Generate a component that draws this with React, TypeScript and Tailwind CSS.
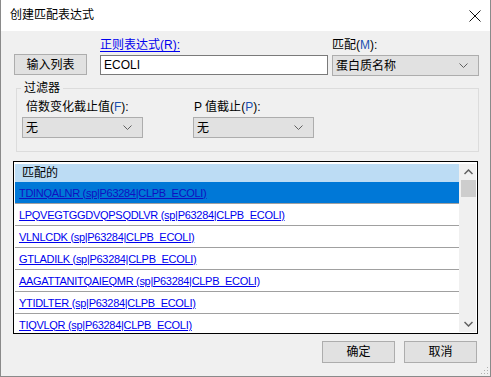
import React from 'react';

const rows = [
  'TDINQALNR (sp|P63284|CLPB_ECOLI)',
  'LPQVEGTGGDVQPSQDLVR (sp|P63284|CLPB_ECOLI)',
  'VLNLCDK (sp|P63284|CLPB_ECOLI)',
  'GTLADILK (sp|P63284|CLPB_ECOLI)',
  'AAGATTANITQAIEQMR (sp|P63284|CLPB_ECOLI)',
  'YTIDLTER (sp|P63284|CLPB_ECOLI)',
  'TIQVLQR (sp|P63284|CLPB_ECOLI)',
];

const font = { fontFamily: '"Segoe UI", "Liberation Sans", "Noto Sans CJK SC", sans-serif' };

function Chevron() {
  return (
    <svg width="9" height="6" viewBox="0 0 9 6" className="shrink-0">
      <path d="M0.5 0.5 L4.5 4.5 L8.5 0.5" fill="none" stroke="#606060" strokeWidth="1" />
    </svg>
  );
}

function Combo({ value, width }: { value: string; width: string }) {
  return (
    <div className={`${width} h-[21px] bg-[#e1e1e1] border border-[#adadad] flex items-center justify-between pl-[3px] pr-[10px] text-[12px] text-black`}>
      <span>{value}</span>
      <Chevron />
    </div>
  );
}

function Hotkey({ k }: { k: string }) {
  return (
    <span>
      (<span className="text-[#1a50b0]">{k}</span>):
    </span>
  );
}

export default function App() {
  return (
    <div
      className="w-[491px] h-[377px] bg-[#f0f0f0] border-x border-b border-[#8a8a8a] flex flex-col text-[12px] text-black leading-[16px] relative overflow-hidden"
      style={font}
    >
      {/* title bar */}
      <div className="h-[31px] bg-white flex items-center justify-between pl-[9px] pr-[9px] shrink-0">
        <span className="text-[12px] mt-[-1px]">创建匹配表达式</span>
        <svg width="12" height="12" viewBox="0 0 12 12">
          <path d="M0.5 0.5 L11.5 11.5 M11.5 0.5 L0.5 11.5" stroke="#111" strokeWidth="1" />
        </svg>
      </div>

      {/* top row */}
      <div className="flex items-start mt-[6px] pl-[13px]">
        <button className="mt-[17px] w-[73px] h-[21px] bg-[#e1e1e1] border border-[#adadad] text-[12px] leading-none">
          输入列表
        </button>
        <div className="ml-[13px] w-[228px] flex flex-col">
          <span className="text-[#0000ee] underline underline-offset-2">
            正则表达式(R):
          </span>
          <div className="mt-[2px] h-[20px] bg-white border border-[#7a7a7a] flex items-center pl-[3px]">
            ECOLI
          </div>
        </div>
        <div className="ml-[4px] flex flex-col">
          <span>
            匹配<Hotkey k="M" />
          </span>
          <div className="mt-[2px]">
            <Combo value="蛋白质名称" width="w-[147px]" />
          </div>
        </div>
      </div>

      {/* filter group */}
      <fieldset className="ml-[15px] mr-[11px] mt-[4px] h-[72px] border border-[#dcdcdc] px-[5px]">
        <legend className="ml-[-1px] px-[3px] text-[12px] leading-[16px]">过滤器</legend>
        <div className="flex mt-[3px]">
          <div className="flex flex-col">
            <span className="pl-[4px]">
              倍数变化截止值<Hotkey k="F" />
            </span>
            <div className="mt-[2px]">
              <Combo value="无" width="w-[121px]" />
            </div>
          </div>
          <div className="flex flex-col ml-[50px]">
            <span className="pl-[1px]">
              P 值截止<Hotkey k="P" />
            </span>
            <div className="mt-[2px]">
              <Combo value="无" width="w-[121px]" />
            </div>
          </div>
        </div>
      </fieldset>

      {/* list */}
      <div className="ml-[12px] mr-[12px] mt-[9px] h-[173px] border border-black bg-white p-[1px] pt-[2px] flex overflow-hidden">
        <div className="flex-1 flex flex-col overflow-hidden">
          <div className="h-[18px] shrink-0 bg-[#bcdcf4] flex items-center pl-[7px]">匹配的</div>
          {rows.map((r, i) => (
            <div
              key={r}
              className={`h-[22px] shrink-0 border-b border-[#a0a0a0] flex items-center pl-[4px] ${
                i === 0 ? 'bg-[#0078d7] text-[#1010c0]' : 'bg-white text-[#0000ee]'
              }`}
            >
              <span className="underline text-[11px] tracking-[-0.3px]" style={{ fontFamily: '"Liberation Sans", sans-serif' }}>
                {r}
              </span>
            </div>
          ))}
        </div>
        <div className="w-[17px] shrink-0 bg-[#f0f0f0] flex flex-col items-center border-l border-[#f0f0f0]">
          <div className="h-[16px] flex items-center justify-center">
            <svg width="9" height="6" viewBox="0 0 9 6">
              <path d="M0.5 5 L4.5 1 L8.5 5" fill="none" stroke="#606060" strokeWidth="1.5" />
            </svg>
          </div>
          <div className="w-[15px] h-[17px] bg-[#cdcdcd]" />
          <div className="flex-1" />
          <div className="h-[16px] flex items-center justify-center">
            <svg width="9" height="6" viewBox="0 0 9 6">
              <path d="M0.5 1 L4.5 5 L8.5 1" fill="none" stroke="#606060" strokeWidth="1.5" />
            </svg>
          </div>
        </div>
      </div>

      {/* buttons */}
      <div className="flex justify-end gap-[9px] mt-[7px] mr-[13px]">
        <button className="w-[73px] h-[22px] bg-[#e1e1e1] border border-[#adadad] text-[12px] leading-none">确定</button>
        <button className="w-[73px] h-[22px] bg-[#e1e1e1] border border-[#adadad] text-[12px] leading-none">取消</button>
      </div>

      {/* size grip */}
      <svg width="8" height="8" viewBox="0 0 8 8" className="absolute right-[1px] bottom-[1px]">
        <rect x="6" y="0" width="1" height="1" fill="#b0b0b0" />
        <rect x="3" y="3" width="1" height="1" fill="#b0b0b0" />
        <rect x="6" y="3" width="1" height="1" fill="#b0b0b0" />
        <rect x="0" y="6" width="1" height="1" fill="#b0b0b0" />
        <rect x="3" y="6" width="1" height="1" fill="#b0b0b0" />
        <rect x="6" y="6" width="1" height="1" fill="#b0b0b0" />
      </svg>
    </div>
  );
}
